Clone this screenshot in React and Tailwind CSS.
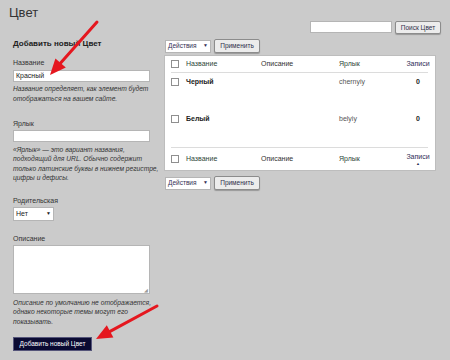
import React from "react";

const Checkbox = () => (
  <span className="block w-[8px] h-[8px] border border-[#8f8f8f] bg-white" />
);

const ActionsBar = () => (
  <div className="flex items-center gap-[3px] pl-[1px]">
    <div className="w-[46px] h-[13px] bg-white border border-[#b5b5b5] flex items-center justify-between px-[2px] text-[6.5px] text-[#332f55]">
      <span>Действия</span>
      <span className="text-[5px]">▼</span>
    </div>
    <button className="w-[46px] h-[14px] bg-[#ececec] border border-[#8c8c8c] rounded-[2px] shadow-[0_1px_1px_rgba(0,0,0,0.25)] text-[6.5px] text-[#2f2f4a]">
      Применить
    </button>
  </div>
);

const Row = ({ name, slug }) => (
  <div className="grid grid-cols-[15px_75px_78px_67px_24px] h-[37px] pt-[4px] items-start text-[7px] leading-[9px]">
    <div className="pt-[1px]">
      <Checkbox />
    </div>
    <div className="font-bold text-[#222]">{name}</div>
    <div />
    <div className="text-[#555]">{slug}</div>
    <div className="text-center font-bold text-[#222]">0</div>
  </div>
);

const Arrow = ({ tail, base, tip, w1, w2 }) => (
  <g>
    <line x1={tail[0]} y1={tail[1]} x2={base[0]} y2={base[1]} stroke="#e5171f" strokeWidth="3" strokeLinecap="round" />
    <polygon points={`${tip[0]},${tip[1]} ${w1[0]},${w1[1]} ${w2[0]},${w2[1]}`} fill="#e5171f" />
  </g>
);

export default function App() {
  return (
    <div className="relative w-[450px] h-[360px] overflow-hidden bg-[#cbcbcb] text-[#333] font-['Liberation_Sans',Arial,sans-serif]">
      {/* Header */}
      <div className="flex justify-between h-[38px]">
        <h1 className="pl-[9px] pt-[5px] text-[13px] leading-[16px] text-[#333]">Цвет</h1>
        <div className="flex items-start gap-[3px] pt-[21px] pr-[9px]">
          <div className="w-[82px] h-[12px] bg-white border border-[#b5b5b5]" />
          <button className="w-[46px] h-[13px] bg-[#ececec] border border-[#8c8c8c] rounded-[2px] shadow-[0_1px_1px_rgba(0,0,0,0.25)] text-[6.5px] text-[#2f2f4a]">
            Поиск Цвет
          </button>
        </div>
      </div>

      <div className="flex">
        {/* Left: add form */}
        <div className="w-[150px] pl-[13px] flex flex-col">
          <h2 className="text-[8px] leading-[12px] font-bold text-[#222]">Добавить новый Цвет</h2>

          <label className="mt-[9px] text-[7px] leading-[8px] text-[#333]">Название</label>
          <div className="mt-[3px] h-[12px] bg-white border border-[#b5b5b5] flex items-center px-[2px] text-[7px] text-[#222]">
            Красный
          </div>
          <p className="mt-[2px] whitespace-nowrap text-[6.7px] leading-[9.5px] italic text-[#333]">
            Название определяет, как элемент будет
            <br />
            отображаться на вашем сайте.
          </p>

          <label className="mt-[17px] text-[7px] leading-[8px] text-[#333]">Ярлык</label>
          <div className="mt-[2px] h-[12px] bg-white border border-[#b5b5b5]" />
          <p className="mt-[2.5px] whitespace-nowrap text-[6.7px] leading-[9.5px] italic text-[#333]">
            «Ярлык» — это вариант названия,
            <br />
            подходящий для URL. Обычно содержит
            <br />
            только латинские буквы в нижнем регистре,
            <br />
            цифры и дефисы.
          </p>

          <label className="mt-[14.5px] text-[7px] leading-[8px] text-[#333]">Родительская</label>
          <div className="mt-[2px] w-[41px] h-[14px] bg-white border border-[#b5b5b5] flex items-center justify-between px-[2px] text-[7px] text-[#222]">
            <span>Нет</span>
            <span className="text-[5px]">▼</span>
          </div>

          <label className="mt-[14px] text-[7px] leading-[8px] text-[#333]">Описание</label>
          <div className="relative mt-[2px] h-[49px] bg-white border border-[#b5b5b5]">
            <span className="absolute right-[1px] bottom-[0px] text-[5px] leading-[5px] text-[#999]">◢</span>
          </div>
          <p className="mt-[3.5px] whitespace-nowrap text-[6.7px] leading-[9.5px] italic text-[#333]">
            Описание по умолчанию не отображается,
            <br />
            однако некоторые темы могут его
            <br />
            показывать.
          </p>

          <button className="mt-[11px] w-[79px] h-[14px] bg-[#0a0a32] border border-[#55557a] text-[6.5px] text-white">
            Добавить новый Цвет
          </button>
        </div>

        {/* Right: list table */}
        <div className="ml-[14px] w-[273px] pt-[1px]">
          <ActionsBar />
          <div className="mt-[2px] w-[272px] bg-white border border-[#bdbdbd] pl-[6px] pr-[7px]">
            <div className="grid grid-cols-[15px_75px_78px_67px_24px] h-[17px] items-center border-b border-[#dcdcdc] text-[7px] text-[#333]">
              <Checkbox />
              <div className="text-[#2d4537]">Название</div>
              <div>Описание</div>
              <div className="text-[#2d4537]">Ярлык</div>
              <div className="text-center text-[#2d2d55]">Записи</div>
            </div>
            <Row name="Черный" slug="chernyiy" />
            <Row name="Белый" slug="belyiy" />
            <div className="grid grid-cols-[15px_75px_78px_67px_24px] h-[23px] items-center border-t border-[#dcdcdc] text-[7px] text-[#333]">
              <Checkbox />
              <div className="text-[#2d4537]">Название</div>
              <div>Описание</div>
              <div className="text-[#2d4537]">Ярлык</div>
              <div className="flex flex-col items-center leading-[9px] text-[#2d2d55]">
                <span>Записи</span>
                <span className="text-[4px] leading-[6px]">▲</span>
              </div>
            </div>
          </div>
          <div className="mt-[5px]">
            <ActionsBar />
          </div>
        </div>
      </div>

      {/* Annotation arrows */}
      <svg className="absolute inset-0 pointer-events-none" width="450" height="360" viewBox="0 0 450 360">
        <Arrow tail={[97, 22]} base={[60.6, 63]} tip={[50, 75]} w1={[65.8, 67.6]} w2={[55.4, 58.4]} />
        <Arrow tail={[157, 306]} base={[110.1, 331.4]} tip={[96, 339]} w1={[113.4, 337.6]} w2={[106.8, 325.2]} />
      </svg>
    </div>
  );
}
